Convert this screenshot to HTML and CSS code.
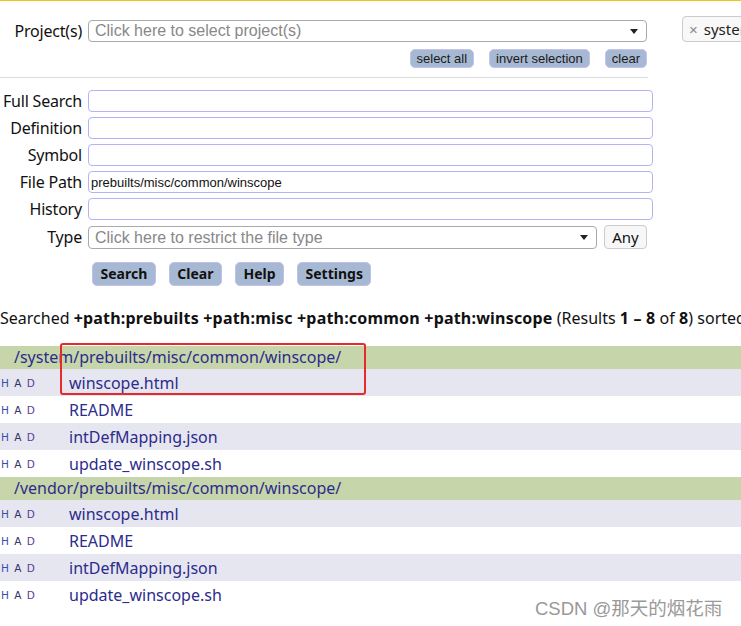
FILE: index.html
```html
<!DOCTYPE html>
<html>
<head>
<meta charset="utf-8">
<link rel="stylesheet" href="styles.css">
</head>
<body>
<div class="page">
  <div class="top-rule"></div>
  <div class="proj-row">
    <label class="lbl">Project(s)</label>
    <div class="select proj-select"><span class="ph">Click here to select project(s)</span><span class="caret"></span></div>
    <div class="chip"><span class="chip-x">×</span>system</div>
  </div>
  <div class="mini-btns">
    <button class="mini">select all</button>
    <button class="mini">invert selection</button>
    <button class="mini">clear</button>
  </div>
  <div class="sep"></div>
  <div class="form-grid">
    <label class="lbl">Full Search</label><div class="field"></div>
    <label class="lbl">Definition</label><div class="field"></div>
    <label class="lbl">Symbol</label><div class="field"></div>
    <label class="lbl">File Path</label><div class="field"><span class="val">prebuilts/misc/common/winscope</span></div>
    <label class="lbl">History</label><div class="field"></div>
    <label class="lbl type-lbl">Type</label>
    <div class="type-row">
      <div class="select type-select"><span class="ph">Click here to restrict the file type</span><span class="caret"></span></div>
      <button class="any">Any</button>
    </div>
  </div>
  <div class="actions">
    <button class="act">Search</button>
    <button class="act">Clear</button>
    <button class="act">Help</button>
    <button class="act">Settings</button>
  </div>
  <p class="summary">Searched <b>+path:prebuilts +path:misc +path:common +path:winscope</b> (Results <b>1 – 8</b> of <b>8</b>) sorted</p>
  <div class="results">
    <div class="dir">/system/prebuilts/misc/common/winscope/</div>
    <div class="row alt"><span class="had"><i class="h">H</i> <i class="a">A</i> <i class="d">D</i></span><span class="fname">winscope.html</span></div>
    <div class="row"><span class="had"><i class="h">H</i> <i class="a">A</i> <i class="d">D</i></span><span class="fname">README</span></div>
    <div class="row alt"><span class="had"><i class="h">H</i> <i class="a">A</i> <i class="d">D</i></span><span class="fname">intDefMapping.json</span></div>
    <div class="row"><span class="had"><i class="h">H</i> <i class="a">A</i> <i class="d">D</i></span><span class="fname">update_winscope.sh</span></div>
    <div class="dir">/vendor/prebuilts/misc/common/winscope/</div>
    <div class="row alt"><span class="had"><i class="h">H</i> <i class="a">A</i> <i class="d">D</i></span><span class="fname">winscope.html</span></div>
    <div class="row"><span class="had"><i class="h">H</i> <i class="a">A</i> <i class="d">D</i></span><span class="fname">README</span></div>
    <div class="row alt"><span class="had"><i class="h">H</i> <i class="a">A</i> <i class="d">D</i></span><span class="fname">intDefMapping.json</span></div>
    <div class="row"><span class="had"><i class="h">H</i> <i class="a">A</i> <i class="d">D</i></span><span class="fname">update_winscope.sh</span></div>
  </div>
  <div class="annot"></div>
  <div class="watermark">CSDN @那天的烟花雨</div>
</div>
</body>
</html>
```
FILE: styles.css
```css
html, body {
  margin: 0;
  padding: 0;
  background: #fff;
}
body {
  width: 741px;
  height: 626px;
  overflow: hidden;
  font-family: "Noto Sans", "Noto Sans CJK SC", sans-serif;
  color: #111;
}
.page {
  position: relative;
  width: 741px;
  height: 626px;
  overflow: hidden;
}
.top-rule {
  height: 1px;
  background: #f2c318;
}
.lbl {
  font-size: 16px;
  line-height: 22px;
  text-align: right;
  color: #111;
  white-space: nowrap;
  letter-spacing: -0.2px;
}
.proj-row {
  display: flex;
  align-items: flex-start;
  margin-top: 19px;
}
.proj-row .lbl {
  width: 82px;
  flex-shrink: 0;
  margin-right: 6px;
}
.select {
  box-sizing: border-box;
  height: 22px;
  border: 1px solid #aaa;
  border-radius: 4px;
  background: #fff;
  display: flex;
  align-items: center;
  padding: 0 8px 0 6px;
  font-family: "Liberation Sans", Arial, sans-serif;
}
.proj-select {
  width: 559px;
  flex-shrink: 0;
}
.ph {
  flex: 1;
  font-size: 16px;
  color: #888;
  white-space: nowrap;
  overflow: hidden;
}
.caret {
  width: 0;
  height: 0;
  border-left: 4px solid transparent;
  border-right: 4px solid transparent;
  border-top: 5px solid #222;
}
.chip {
  box-sizing: border-box;
  flex-shrink: 0;
  margin-left: 35px;
  margin-top: -4px;
  height: 26px;
  padding: 0 8px 0 6px;
  border: 1px solid #ccc;
  border-radius: 4px;
  background: #f8f8f8;
  font-size: 15px;
  line-height: 24px;
  white-space: nowrap;
  color: #222;
}
.chip-x {
  color: #888;
  margin-right: 6px;
  font-family: "Liberation Sans", Arial, sans-serif;
}
.mini-btns {
  width: 647px;
  display: flex;
  justify-content: flex-end;
  gap: 15px;
  margin-top: 7px;
}
.mini {
  box-sizing: border-box;
  height: 19px;
  padding: 0 6px;
  border: 1px solid #c4c4ee;
  border-radius: 5px;
  background: #a7b9d2;
  font-family: "Liberation Sans", Arial, sans-serif;
  font-size: 13px;
  line-height: 17px;
  color: #1a1a1a;
}
.sep {
  width: 648px;
  height: 1px;
  background: #dcdcdc;
  margin-top: 9px;
}
.form-grid {
  display: grid;
  grid-template-columns: 82px 565px;
  column-gap: 6px;
  row-gap: 5px;
  margin-top: 12px;
}
.field {
  box-sizing: border-box;
  height: 22px;
  border: 1px solid #b4b4f5;
  border-radius: 4px;
  background: #fff;
  display: flex;
  align-items: center;
  padding: 0 2px;
}
.val {
  font-family: "Liberation Sans", Arial, sans-serif;
  font-size: 13px;
  color: #111;
}
.type-lbl {
  margin-top: 1px;
}
.type-row {
  display: flex;
  gap: 7px;
  margin-top: 1px;
  align-items: flex-start;
}
.type-select {
  width: 509px;
  height: 23px;
}
.any {
  box-sizing: border-box;
  height: 24px;
  width: 43px;
  margin-top: -1px;
  border: 1px solid #ccc;
  border-radius: 4px;
  background: #f7f7f7;
  font-family: "Noto Sans", sans-serif;
  font-size: 15px;
  line-height: 20px;
  padding: 0;
  color: #111;
}
.actions {
  display: flex;
  gap: 13px;
  margin-top: 13px;
  padding-left: 92px;
}
.act {
  box-sizing: border-box;
  height: 24px;
  padding: 0 7.5px;
  border: 1px solid #c0c0f0;
  border-radius: 5px;
  background: #a7b9d2;
  font-family: "Noto Sans", sans-serif;
  font-weight: bold;
  font-size: 14px;
  line-height: 20px;
  color: #111;
}
.summary {
  margin: 22px 0 0 0;
  font-size: 16px;
  line-height: 20px;
  white-space: nowrap;
  color: #111;
}
.summary b {
  letter-spacing: 0.2px;
}
.results {
  margin-top: 18px;
}
.dir {
  height: 23px;
  background: #c6d5aa;
  padding-left: 14px;
  font-size: 16px;
  line-height: 23px;
  color: #2c2c8c;
}
.row {
  height: 27px;
  display: flex;
  align-items: center;
  background: #fff;
}
.row.alt {
  background: #e6e6f0;
}
.had {
  width: 69px;
  padding-left: 1px;
  box-sizing: border-box;
  font-family: "DejaVu Sans", sans-serif;
  font-size: 10.5px;
  letter-spacing: 1px;
  white-space: pre;
}
.had i {
  font-style: normal;
}
.had .h { color: #3a4ea8; }
.had .a { color: #333366; }
.had .d { color: #5a3a9a; }
.fname {
  font-size: 16px;
  color: #2c2c8c;
}
.annot {
  position: absolute;
  left: 60px;
  top: 343px;
  width: 302px;
  height: 48px;
  border: 2px solid #e8282b;
  border-radius: 3px;
}
.watermark {
  position: absolute;
  left: 535px;
  top: 594px;
  font-family: "Liberation Sans", "Noto Sans CJK SC", sans-serif;
  font-size: 18.5px;
  color: #999;
  text-shadow: 0 0 1px #fff, 1px 1px 0 #fff;
  white-space: nowrap;
}
```
